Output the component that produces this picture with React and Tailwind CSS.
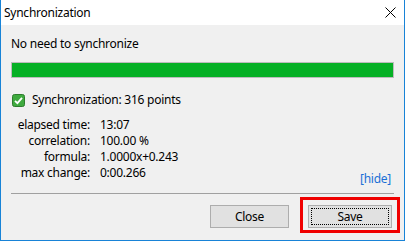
import React from "react";

const stats = [
  ["elapsed time:", "13:07"],
  ["correlation:", "100.00 %"],
  ["formula:", "1.0000x+0.243"],
  ["max change:", "0:00.266"],
];

function CheckIcon() {
  return (
    <svg width="13" height="13" viewBox="0 0 13 13">
      <rect x="0.5" y="0.5" width="12" height="12" rx="2" fill="#3faa3f" stroke="#2d7d2d" />
      <path d="M3 6.8 L5.4 9.2 L10 3.8" fill="none" stroke="#fff" strokeWidth="1.8" />
    </svg>
  );
}

function App() {
  return (
    <div
      className="w-[405px] h-[241px] flex flex-col bg-[#f0f0f0] border-x border-b border-[#1883d7] text-[12px] leading-[16px] tracking-[-0.25px] text-black"
      style={{ fontFamily: '"Noto Sans", "Liberation Sans", sans-serif' }}
    >
      <div className="h-[25px] bg-white flex items-center justify-between pl-[3px] pr-[8px]">
        <span>Synchronization</span>
        <svg width="11" height="11" viewBox="0 0 11 11">
          <path d="M0.5 0.5 L10.5 10.5 M10.5 0.5 L0.5 10.5" stroke="#000" strokeWidth="1" />
        </svg>
      </div>
      <div className="flex flex-col px-[10px]">
        <div className="mt-[11px]">No need to synchronize</div>
        <div className="mt-[10px] h-[16px] border border-[#bcbcbc] bg-[#06b025]" />
        <div className="mt-[14px] flex items-center gap-[7px] pl-[1px]">
          <CheckIcon />
          <span>Synchronization: 316 points</span>
        </div>
        <div className="mt-[9px] flex justify-between items-end">
          <div className="grid grid-cols-[79px_auto] gap-x-[10px]">
            {stats.map(([k, v]) => (
              <React.Fragment key={k}>
                <span className="text-right">{k}</span>
                <span>{v}</span>
              </React.Fragment>
            ))}
          </div>
          <span className="text-[#1a6fd6] -mb-[6px] mr-[3px]">[hide]</span>
        </div>
        <div className="mt-[12px] h-px bg-[#a0a0a0]" />
        <div className="mt-[3px] flex justify-end items-start -mr-[6px]">
          <button className="mt-[8px] w-[79px] h-[23px] border border-[#adadad] bg-[#e1e1e1]">Close</button>
          <div className="ml-[11px] border-[3px] border-[#f00000] pt-[5px] pb-[2px] px-[5px]">
            <button className="w-[84px] h-[23px] border border-[#adadad] bg-[#e1e1e1] p-[2px]">
              <div className="h-full border border-dotted border-black flex items-center justify-center">Save</div>
            </button>
          </div>
        </div>
      </div>
    </div>
  );
}

export default App;
